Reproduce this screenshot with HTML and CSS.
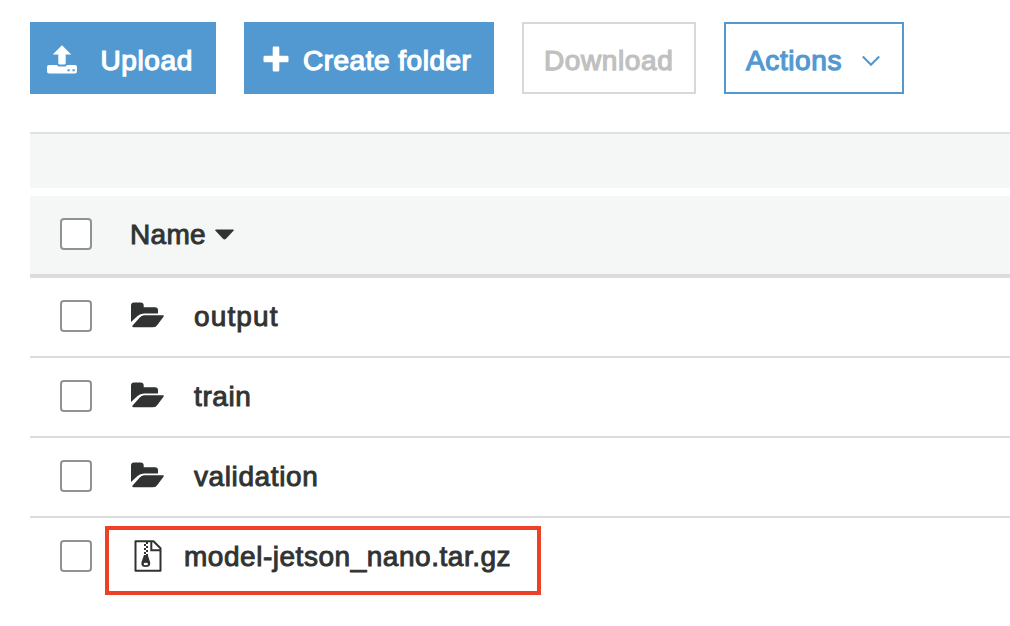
FILE: index.html
```html
<!DOCTYPE html>
<html lang="en">
<head>
<meta charset="utf-8">
<title>Files</title>
<link rel="stylesheet" href="styles.css">
</head>
<body>
<svg class="defs" width="0" height="0">
  <symbol id="folder" viewBox="0 0 34 26">
    <path d="M1 20V3.500Q1 .5 4 .5H10.500Q13.700 .5 13.700 3.500V5.200H25Q28 5.200 28 8.200V11.500H14Q10 11.500 7.500 14Z"/>
    <path d="M10 15.200Q11.800 13.300 14.500 13.300H33Q34.300 13.300 33.500 14.700L27.500 22.700Q26 25.200 23 25.200H3.500Q1.700 25.200 2.600 23.600Z"/>
  </symbol>
</svg>
<div class="toolbar">
  <button class="btn primary upload">
    <svg width="30" height="30" viewBox="0 0 30 30" fill="currentColor"><path d="M15 .3 24.300 9.500H18.700V18Q18.700 19.500 17.200 19.500H12.800Q11.300 19.500 11.300 18V9.500H5.700Z"/><path fill-rule="evenodd" d="M2 20H10Q10.700 21.600 12.500 21.600H17.500Q19.300 21.600 20 20H28Q30 20 30 22V26.500Q30 28.500 28 28.500H2Q0 28.500 0 26.500V22Q0 20 2 20ZM20.500 24.300V26.200H22.700V24.300ZM25.500 24.300V26.200H27.700V24.300Z"/></svg>
    <span class="t-upload">Upload</span>
  </button>
  <button class="btn primary create">
    <svg width="26" height="26" viewBox="0 0 26 26" fill="currentColor"><path d="M11 .5H15Q16.300 .5 16.300 1.800V9.700H24Q25.500 9.700 25.500 11V15Q25.500 16.300 24 16.300H16.300V24.200Q16.300 25.500 15 25.500H11Q9.700 25.500 9.700 24.200V16.300H2Q.5 16.300 .5 15V11Q.5 9.700 2 9.700H9.700V1.800Q9.700 .5 11 .5Z"/></svg>
    <span class="t-create">Create folder</span>
  </button>
  <button class="btn disabled" disabled><span class="t-download">Download</span></button>
  <button class="btn outline"><span class="t-actions">Actions</span>
    <svg width="18" height="12" viewBox="0 0 18 12" fill="none" stroke="currentColor" stroke-width="2.100"><path d="M.8 1.500 9 9.700 17.200 1.500"/></svg>
  </button>
</div>
<div class="listing">
  <div class="strip"></div>
  <div class="row head"><span class="check"></span><span class="label t-name">Name</span>
    <svg class="caret" width="20" height="12" viewBox="0 0 20 12"><path d="M1 .5H18Q19.600 .5 18.500 1.800L11 9.800Q9.500 11.300 8 9.800L.5 1.800Q-.6 .5 1 .5Z"/></svg></div>
  <div class="row"><span class="check"></span><svg class="folder"><use href="#folder"/></svg><span class="label t-output">output</span></div>
  <div class="row"><span class="check"></span><svg class="folder"><use href="#folder"/></svg><span class="label t-train">train</span></div>
  <div class="row"><span class="check"></span><svg class="folder"><use href="#folder"/></svg><span class="label t-validation">validation</span></div>
  <div class="row last"><span class="check"></span>
    <svg class="archive" width="28" height="32" viewBox="0 0 28 32"><path fill="none" stroke="currentColor" stroke-width="2" stroke-linejoin="round" d="M1.500 1.300H19.500L26.500 8.300V30.800H1.500Z"/><path fill="none" stroke="currentColor" stroke-width="2" d="M17.300 1V10.200H26.500"/><path d="M12 2H14V4H12ZM10 4H12V6H10ZM12 6H14V8H12ZM10 8H12V10H10ZM12 10H14V12H12ZM10 12H12V14H10ZM12 14H14V16H12Z"/><path fill-rule="evenodd" d="M10 15H13.800L16.200 22.500Q16.800 27 11.800 27Q6.800 27 7.400 22.500ZM11.800 22.700Q9.600 22.700 9.600 24T11.800 25.300T14 24T11.800 22.700Z"/></svg>
    <span class="label t-model">model-jetson_nano.tar.gz</span>
    <span class="highlight"></span></div>
</div>
</body>
</html>
```
FILE: styles.css
```css
* { box-sizing: border-box; }
body {
  margin: 0;
  height: 626px;
  padding: 22px 0 0 30px;
  overflow: hidden;
  background: #fff;
  color: #303332;
  font: 28px/34px "Liberation Sans", Arial, sans-serif;
}
.defs { display: block; position: absolute; }
svg { flex: none; }
.toolbar { display: flex; gap: 28px; height: 72px; margin-bottom: 38px; }
.btn {
  display: flex;
  align-items: center;
  height: 72px;
  padding: 4px 0 0;
  border: 2px solid;
  border-radius: 0;
  background: #fff;
  font: inherit;
  white-space: nowrap;
  -webkit-text-stroke: 1.25px currentColor;
}
.btn span { padding-top: 2px; }
.primary { background: #5299d2; border-color: #5299d2; color: #fff; }
.upload { width: 186px; padding-left: 15px; gap: 23.5px; }
.create { width: 250px; padding-left: 17px; gap: 14px; }
.create svg { margin-top: -3px; }
.disabled { width: 174px; padding-left: 20px; border-color: #d8d8d8; color: #bfc1c0; }
.outline { width: 180px; padding-left: 20px; gap: 20px; border-color: #5299d2; color: #5299d2; }
.outline svg { margin-top: 2px; }
.strip { height: 56px; margin-bottom: 8px; border-top: 2px solid #dfe0e0; background: #f5f7f6; }
.row {
  position: relative;
  display: flex;
  align-items: center;
  height: 80px;
  padding: 0 0 2px 30px;
  border-bottom: 2px solid #dcdcdc;
}
.head { height: 82px; border-bottom-width: 4px; background: #f5f7f6; }
.last { border-bottom: 0; padding-bottom: 4px; }
.check { flex: none; width: 32px; height: 32px; border: 2px solid #8e9295; border-radius: 4px; background: #fff; }
.label { padding-top: 2px; white-space: nowrap; -webkit-text-stroke: 0.95px currentColor; }
.head .label { margin-left: 38px; }
.caret { margin: 2px 0 0 9px; fill: #303332; }
.folder { width: 34px; height: 26px; margin: -2px 0 0 38px; fill: #303332; }
.folder + .label { margin-left: 30px; }
.archive { margin-left: 42px; fill: #303332; }
.archive + .label { margin-left: 22px; }
.highlight { position: absolute; left: 75px; top: 8px; width: 436px; height: 69px; border: 4px solid #ec4126; }
.t-upload, .t-download, .t-actions { letter-spacing: 0.6px; }
.t-create { letter-spacing: 0.5px; }
.t-name { letter-spacing: 0.3px; }
.t-output { letter-spacing: 1.15px; }
.t-train, .t-validation { letter-spacing: 0.6px; }
.t-model { letter-spacing: 0.53px; }
```
